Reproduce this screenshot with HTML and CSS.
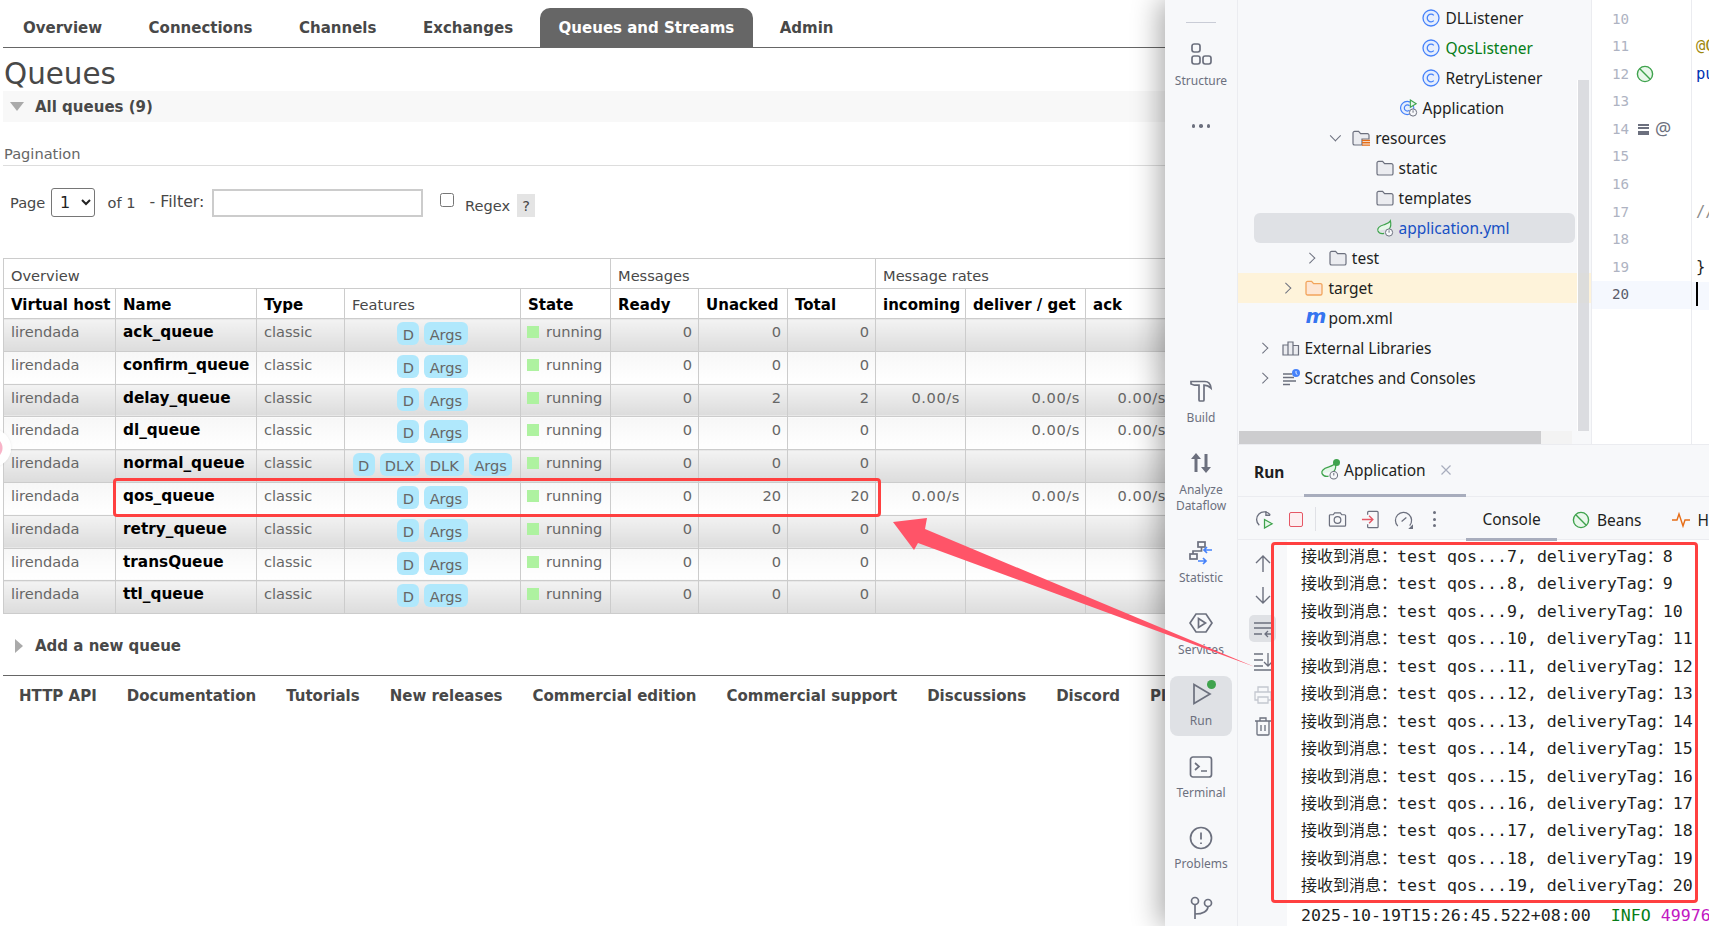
FILE: index.html
```html
<!DOCTYPE html>
<html lang="en">
<head>
<meta charset="utf-8">
<title>RabbitMQ Queues and IDE</title>
<link rel="stylesheet" href="styles.css">
</head>
<body>
<svg class="defs" width="0" height="0" aria-hidden="true">
  <symbol id="i-class" viewBox="0 0 18 18"><circle cx="9" cy="9" r="8" fill="#e7effd" stroke="#4682fa" stroke-width="1.3"/><path d="M11.8 6.4A3.8 3.8 0 1 0 11.8 11.6" fill="none" stroke="#4682fa" stroke-width="1.3"/></symbol>
  <symbol id="i-app" viewBox="0 0 20 20"><circle cx="8" cy="10" r="7.4" fill="#e7effd" stroke="#4682fa" stroke-width="1.3"/><path d="M10.6 7.6A3.4 3.4 0 1 0 10.6 12.4" fill="none" stroke="#4682fa" stroke-width="1.3"/><path d="M11.5 1.2l6.5 4-6.5 4z" fill="#e6f7e9" stroke="#3fa34d" stroke-width="1.2"/><circle cx="14.5" cy="15" r="4" fill="#f7f8fa" stroke="#6c707e" stroke-width="1.1"/><path d="M14.5 12.6v2.6" stroke="#6c707e" stroke-width="1.1"/></symbol>
  <symbol id="i-folder" viewBox="0 0 18 18"><path d="M1 4a1.6 1.6 0 0 1 1.6-1.6h4l2 2.2h6.8A1.6 1.6 0 0 1 17 6.200v8.200a1.600 1.600 0 0 1-1.600 1.600H2.600A1.600 1.600 0 0 1 1 14.400z" fill="#ebecf0" stroke="#6c707e" stroke-width="1.2"/></symbol>
  <symbol id="i-res" viewBox="0 0 18 18"><path d="M1 4a1.600 1.600 0 0 1 1.600-1.600h4l2 2.200h6.800A1.600 1.600 0 0 1 17 6.200V10H10v6H2.600A1.600 1.600 0 0 1 1 14.400z" fill="#ebecf0" stroke="#6c707e" stroke-width="1.2"/><path d="M10 11.500h8M10 13.800h8M10 16.100h8" stroke="#e66d17" stroke-width="1.400"/></symbol>
  <symbol id="i-target" viewBox="0 0 18 18"><path d="M1 4a1.600 1.600 0 0 1 1.600-1.600h4l2 2.200h6.800A1.600 1.600 0 0 1 17 6.200v8.200a1.600 1.600 0 0 1-1.600 1.600H2.600A1.600 1.600 0 0 1 1 14.400z" fill="#fde6d4" stroke="#f2a45c" stroke-width="1.300"/></symbol>
  <symbol id="i-spring" viewBox="0 0 20 20"><path d="M2 13c-1-5 5-6 8-7 3-1 5-2 6-4 1 4 .5 7-1.500 9M9 16C5 17 3 15 2 13" fill="#e6f7e9" stroke="#3fa34d" stroke-width="1.300"/><circle cx="14.500" cy="15" r="4" fill="#f7f8fa" stroke="#6c707e" stroke-width="1.100"/><path d="M14.500 12.600v2.600" stroke="#6c707e" stroke-width="1.100"/></symbol>
  <symbol id="i-lib" viewBox="0 0 18 18"><path d="M1 6h5v10H1zM6 3h5v13H6zM11 6.500h5.500V16H11z" fill="#ebecf0" stroke="#6c707e" stroke-width="1.200"/></symbol>
  <symbol id="i-scratch" viewBox="0 0 18 18"><path d="M1 5h9M1 8.500h11M1 12h13M1 15.500h7" stroke="#6c707e" stroke-width="1.300"/><circle cx="14" cy="4" r="4" fill="#4682fa"/><path d="M14 2v2.500l1.400 1" stroke="#fff" stroke-width=".9" fill="none"/></symbol>
  <symbol id="i-nobeans" viewBox="0 0 18 18"><circle cx="9" cy="9" r="7.600" fill="#eaf7ec" stroke="#3fa34d" stroke-width="1.400"/><path d="M3.800 3.800L14.200 14.200" stroke="#3fa34d" stroke-width="1.400"/></symbol>
  <symbol id="s-structure" viewBox="0 0 24 24"><rect x="3" y="2" width="8" height="8" rx="2.200"/><rect x="3" y="14" width="8" height="8" rx="2.200"/><rect x="14" y="14" width="8" height="8" rx="2.200"/></symbol>
  <symbol id="s-build" viewBox="0 0 24 24"><path d="M2 2.500h14c3.500 0 5.500 2.500 6 6.500-2-1.800-4-2.800-7-2.800V21a1 1 0 0 1-1 1h-3a1 1 0 0 1-1-1V6.200H5.500L2 5z"/></symbol>
  <symbol id="s-analyze" viewBox="0 0 24 24"><path d="M7 2L2 8h3.500v13h3V8H12zM17 22l5-6h-3.500V3h-3v13H12z" class="solid"/></symbol>
  <symbol id="s-stat" viewBox="0 0 24 24"><rect x="9" y="1" width="7" height="5"/><path d="M12.500 6v4H4v3"/><rect x="1" y="13" width="7" height="5"/><path d="M23 9h-8M18 6l-3 3 3 3M9 20h8M14 17l3 3-3 3" class="blue"/></symbol>
  <symbol id="s-services" viewBox="0 0 24 24"><path d="M7 3h10l6 9-6 9H7l-6-9z"/><path d="M9.500 7.500l7 4.500-7 4.500z"/></symbol>
  <symbol id="s-run" viewBox="0 0 24 24"><path d="M5 2.500L21 12 5 21.500z"/></symbol>
  <symbol id="s-terminal" viewBox="0 0 24 24"><rect x="1.500" y="2" width="21" height="20" rx="2.500"/><path d="M6 8l4 3.500L6 15M12 16h6"/></symbol>
  <symbol id="s-problems" viewBox="0 0 24 24"><circle cx="12" cy="12" r="10.500"/><path d="M12 6.500v7M12 16.500v1.500"/></symbol>
  <symbol id="s-git" viewBox="0 0 24 24"><circle cx="6" cy="5" r="3.500"/><circle cx="19" cy="7" r="3.500"/><path d="M6 8.500V23M6 18c8 0 13-3 13-7.500"/></symbol>
</svg>

<main class="browser">
  <nav class="nav">
    <a class="tab">Overview</a><a class="tab">Connections</a><a class="tab">Channels</a><a class="tab">Exchanges</a><a class="tab tab-on">Queues and Streams</a><a class="tab">Admin</a>
  </nav>
  <h1 class="title">Queues</h1>
  <div class="section-bar"><span class="tri-down"></span><span>All queues (9)</span></div>
  <h3 class="pag-title">Pagination</h3>
  <div class="pager">
    <span class="pg-page">Page</span>
    <select class="pg-select"><option>1</option></select>
    <span class="pg-of">of 1</span>
    <span class="pg-filter">- Filter:</span>
    <input class="pg-input" type="text">
    <input class="pg-check" type="checkbox">
    <span class="pg-regex">Regex</span>
    <span class="pg-help">?</span>
  </div>
  <table class="queues">
    <colgroup><col class="c1"><col class="c2"><col class="c3"><col class="c4"><col class="c5"><col class="c6"><col class="c7"><col class="c8"><col class="c9"><col class="c10"><col class="c11"></colgroup>
    <thead>
      <tr class="group"><th colspan="5">Overview</th><th colspan="3">Messages</th><th colspan="3">Message rates</th></tr>
      <tr class="head"><th>Virtual host</th><th>Name</th><th>Type</th><th class="plain">Features</th><th>State</th><th>Ready</th><th>Unacked</th><th>Total</th><th>incoming</th><th>deliver / get</th><th>ack</th></tr>
    </thead>
    <tbody>
      <tr class="alt1"><td>lirendada</td><td class="nm">ack_queue</td><td>classic</td><td><div class="feat"><span class="bdg">D</span><span class="bdg">Args</span></div></td><td><span class="st"></span>running</td><td class="r">0</td><td class="r">0</td><td class="r">0</td><td></td><td></td><td></td></tr>
      <tr class="alt2"><td>lirendada</td><td class="nm">confirm_queue</td><td>classic</td><td><div class="feat"><span class="bdg">D</span><span class="bdg">Args</span></div></td><td><span class="st"></span>running</td><td class="r">0</td><td class="r">0</td><td class="r">0</td><td></td><td></td><td></td></tr>
      <tr class="alt1"><td>lirendada</td><td class="nm">delay_queue</td><td>classic</td><td><div class="feat"><span class="bdg">D</span><span class="bdg">Args</span></div></td><td><span class="st"></span>running</td><td class="r">0</td><td class="r">2</td><td class="r">2</td><td class="r rt">0.00/s</td><td class="r rt">0.00/s</td><td class="r rt">0.00/s</td></tr>
      <tr class="alt2"><td>lirendada</td><td class="nm">dl_queue</td><td>classic</td><td><div class="feat"><span class="bdg">D</span><span class="bdg">Args</span></div></td><td><span class="st"></span>running</td><td class="r">0</td><td class="r">0</td><td class="r">0</td><td></td><td class="r rt">0.00/s</td><td class="r rt">0.00/s</td></tr>
      <tr class="alt1"><td>lirendada</td><td class="nm">normal_queue</td><td>classic</td><td><div class="feat"><span class="bdg">D</span><span class="bdg">DLX</span><span class="bdg">DLK</span><span class="bdg">Args</span></div></td><td><span class="st"></span>running</td><td class="r">0</td><td class="r">0</td><td class="r">0</td><td></td><td></td><td></td></tr>
      <tr class="alt2"><td>lirendada</td><td class="nm">qos_queue</td><td>classic</td><td><div class="feat"><span class="bdg">D</span><span class="bdg">Args</span></div></td><td><span class="st"></span>running</td><td class="r">0</td><td class="r">20</td><td class="r">20</td><td class="r rt">0.00/s</td><td class="r rt">0.00/s</td><td class="r rt">0.00/s</td></tr>
      <tr class="alt1"><td>lirendada</td><td class="nm">retry_queue</td><td>classic</td><td><div class="feat"><span class="bdg">D</span><span class="bdg">Args</span></div></td><td><span class="st"></span>running</td><td class="r">0</td><td class="r">0</td><td class="r">0</td><td></td><td></td><td></td></tr>
      <tr class="alt2"><td>lirendada</td><td class="nm">transQueue</td><td>classic</td><td><div class="feat"><span class="bdg">D</span><span class="bdg">Args</span></div></td><td><span class="st"></span>running</td><td class="r">0</td><td class="r">0</td><td class="r">0</td><td></td><td></td><td></td></tr>
      <tr class="alt1"><td>lirendada</td><td class="nm">ttl_queue</td><td>classic</td><td><div class="feat"><span class="bdg">D</span><span class="bdg">Args</span></div></td><td><span class="st"></span>running</td><td class="r">0</td><td class="r">0</td><td class="r">0</td><td></td><td></td><td></td></tr>
    </tbody>
  </table>
  <div class="add"><span class="tri-right"></span><span>Add a new queue</span></div>
  <footer class="foot">
    <a>HTTP API</a><a>Documentation</a><a>Tutorials</a><a>New releases</a><a>Commercial edition</a><a>Commercial support</a><a>Discussions</a><a>Discord</a><a>Plugins</a>
  </footer>
  <div class="float-dot"></div>
</main>

<aside class="ide">
  <div class="rail">
    <div class="rail-dash"></div>
    <div class="rail-item"><svg class="ri"><use href="#s-structure"/></svg><span>Structure</span></div>
    <div class="rail-dots"><i></i><i></i><i></i></div>
    <div class="rail-bottom">
      <div class="rail-item build"><svg class="ri"><use href="#s-build"/></svg><span>Build</span></div>
      <div class="rail-item analyze"><svg class="ri ri-solid"><use href="#s-analyze"/></svg><span>Analyze<br>Dataflow</span></div>
      <div class="rail-item stat"><svg class="ri"><use href="#s-stat"/></svg><span>Statistic</span></div>
      <div class="rail-item"><svg class="ri"><use href="#s-services"/></svg><span>Services</span></div>
      <div class="rail-item active"><div class="run-ico"><svg class="ri"><use href="#s-run"/></svg><b class="run-dot"></b></div><span>Run</span></div>
      <div class="rail-item term"><svg class="ri"><use href="#s-terminal"/></svg><span>Terminal</span></div>
      <div class="rail-item prob"><svg class="ri"><use href="#s-problems"/></svg><span>Problems</span></div>
      <div class="rail-item git"><svg class="ri"><use href="#s-git"/></svg></div>
    </div>
  </div>
  <div class="work">
    <div class="upper">
      <div class="tree">
        <div class="row l6"><i class="chev"></i><svg class="ti"><use href="#i-class"/></svg><span>DLListener</span></div>
        <div class="row l6"><i class="chev"></i><svg class="ti"><use href="#i-class"/></svg><span class="green">QosListener</span></div>
        <div class="row l6"><i class="chev"></i><svg class="ti"><use href="#i-class"/></svg><span>RetryListener</span></div>
        <div class="row l5"><i class="chev"></i><svg class="ti"><use href="#i-app"/></svg><span>Application</span></div>
        <div class="row l3"><i class="chev open"></i><svg class="ti"><use href="#i-res"/></svg><span>resources</span></div>
        <div class="row l4"><i class="chev"></i><svg class="ti"><use href="#i-folder"/></svg><span>static</span></div>
        <div class="row l4"><i class="chev"></i><svg class="ti"><use href="#i-folder"/></svg><span>templates</span></div>
        <div class="row l4 sel"><i class="chev"></i><svg class="ti"><use href="#i-spring"/></svg><span class="blue-t">application.yml</span></div>
        <div class="row l2"><i class="chev closed"></i><svg class="ti"><use href="#i-folder"/></svg><span>test</span></div>
        <div class="row l1 excl"><i class="chev closed"></i><svg class="ti"><use href="#i-target"/></svg><span>target</span></div>
        <div class="row l1"><i class="chev"></i><i class="ti maven">m</i><span>pom.xml</span></div>
        <div class="row l0"><i class="chev closed"></i><svg class="ti"><use href="#i-lib"/></svg><span>External Libraries</span></div>
        <div class="row l0"><i class="chev closed"></i><svg class="ti"><use href="#i-scratch"/></svg><span>Scratches and Consoles</span></div>
        <div class="vscroll"></div>
        <div class="hscroll"><div class="hthumb"></div></div>
      </div>
      <div class="editor">
        <div class="gutter">
          <div class="gl">10</div>
          <div class="gl">11</div>
          <div class="gl">12<svg class="gi"><use href="#i-nobeans"/></svg></div>
          <div class="gl">13</div>
          <div class="gl">14<i class="gi-block"></i><span class="gi-at">@</span></div>
          <div class="gl">15</div>
          <div class="gl">16</div>
          <div class="gl">17</div>
          <div class="gl">18</div>
          <div class="gl">19</div>
          <div class="gl cur">20</div>
        </div>
        <div class="code">
          <div class="cl"></div>
          <div class="cl anno">@C</div>
          <div class="cl kw">pu</div>
          <div class="cl"></div>
          <div class="cl"></div>
          <div class="cl"></div>
          <div class="cl"></div>
          <div class="cl cmt">//</div>
          <div class="cl"></div>
          <div class="cl">}</div>
          <div class="cl cur"><i class="caret"></i></div>
        </div>
      </div>
    </div>
    <div class="panel">
      <div class="ptabs">
        <span class="p-run">Run</span>
        <div class="p-app">
          <svg class="pa-ico"><use href="#i-spring"/></svg><b class="pa-dot"></b>
          <span>Application</span>
          <svg class="pa-x" viewBox="0 0 10 10"><path d="M.5.5l9 9M9.500.5l-9 9"/></svg>
        </div>
      </div>
      <div class="ptools">
        <svg class="tb t-rerun" viewBox="0 0 20 20"><path d="M16 5A8 8 0 1 0 4.500 16" fill="none" stroke="#6c707e" stroke-width="1.400"/><path d="M11.500 1v4.500H16" fill="none" stroke="#6c707e" stroke-width="1.400"/><path d="M10 10l8 4.500-8 4.500z" fill="#e6f7e9" stroke="#3fa34d" stroke-width="1.300"/></svg>
        <span class="t-stop"></span>
        <span class="t-sep"></span>
        <svg class="tb t-cam" viewBox="0 0 20 20"><path d="M1.500 6a1 1 0 0 1 1-1h3l1.500-2h6l1.500 2h3a1 1 0 0 1 1 1v10a1 1 0 0 1-1 1h-15a1 1 0 0 1-1-1z" fill="none" stroke="#6c707e" stroke-width="1.300"/><circle cx="10" cy="10.500" r="3.500" fill="none" stroke="#6c707e" stroke-width="1.300"/></svg>
        <svg class="tb t-exit" viewBox="0 0 20 20"><path d="M7 5V2.500a1 1 0 0 1 1-1h9a1 1 0 0 1 1 1v15a1 1 0 0 1-1 1H8a1 1 0 0 1-1-1V15" fill="none" stroke="#6c707e" stroke-width="1.300"/><path d="M1 10h11M8.500 6l4 4-4 4" fill="none" stroke="#e55765" stroke-width="1.400"/></svg>
        <svg class="tb t-dial" viewBox="0 0 20 20"><path d="M4 17a8.500 8.500 0 1 1 12.500-.5" fill="none" stroke="#6c707e" stroke-width="1.300"/><path d="M8 12l5-4" stroke="#6c707e" stroke-width="1.300"/><path d="M20 15v5h-5z" fill="#6c707e"/></svg>
        <span class="t-more"><i></i><i></i><i></i></span>
        <span class="pt-tab pt-on">Console</span>
        <span class="pt-tab pt-beans"><svg class="pt-i"><use href="#i-nobeans"/></svg>Beans</span>
        <span class="pt-tab pt-h"><svg class="pt-i" viewBox="0 0 18 18"><path d="M0 9h5l2-6 4 12 2-6h5" fill="none" stroke="#e66d17" stroke-width="1.400"/></svg>H</span>
      </div>
      <div class="pbody">
        <div class="side">
          <svg class="sb" viewBox="0 0 20 20"><path d="M10 18V3M3 9l7-7 7 7" fill="none" stroke="#6c707e" stroke-width="1.400"/></svg>
          <svg class="sb" viewBox="0 0 20 20"><path d="M10 2v15M3 11l7 7 7-7" fill="none" stroke="#6c707e" stroke-width="1.400"/></svg>
          <div class="sb-box"><svg class="sb" viewBox="0 0 20 20"><path d="M1 4h18M1 9h18M1 15h8M19 9v6h-7M15 12l-3 3 3 3" fill="none" stroke="#6c707e" stroke-width="1.300"/></svg></div>
          <svg class="sb" viewBox="0 0 20 20"><path d="M1 3h9M1 9h9M1 15h9M1 19h18M15 2v13M11 11l4 4 4-4" fill="none" stroke="#6c707e" stroke-width="1.300"/></svg>
          <svg class="sb sb-dim" viewBox="0 0 20 20"><path d="M5 7V2h10v5M5 15H2V7h16v8h-3M5 12h10v6H5z" fill="none" stroke="#c4c7d0" stroke-width="1.300"/></svg>
          <svg class="sb" viewBox="0 0 20 20"><path d="M2 5h16M7 5V2h6v3M4 5v13a1 1 0 0 0 1 1h10a1 1 0 0 0 1-1V5M8 9v6M12 9v6" fill="none" stroke="#6c707e" stroke-width="1.300"/></svg>
        </div>
        <div class="console">
          <div><span class="zh">接收到消息：</span>test qos...7, deliveryTag<span class="zh">：</span>8</div>
          <div><span class="zh">接收到消息：</span>test qos...8, deliveryTag<span class="zh">：</span>9</div>
          <div><span class="zh">接收到消息：</span>test qos...9, deliveryTag<span class="zh">：</span>10</div>
          <div><span class="zh">接收到消息：</span>test qos...10, deliveryTag<span class="zh">：</span>11</div>
          <div><span class="zh">接收到消息：</span>test qos...11, deliveryTag<span class="zh">：</span>12</div>
          <div><span class="zh">接收到消息：</span>test qos...12, deliveryTag<span class="zh">：</span>13</div>
          <div><span class="zh">接收到消息：</span>test qos...13, deliveryTag<span class="zh">：</span>14</div>
          <div><span class="zh">接收到消息：</span>test qos...14, deliveryTag<span class="zh">：</span>15</div>
          <div><span class="zh">接收到消息：</span>test qos...15, deliveryTag<span class="zh">：</span>16</div>
          <div><span class="zh">接收到消息：</span>test qos...16, deliveryTag<span class="zh">：</span>17</div>
          <div><span class="zh">接收到消息：</span>test qos...17, deliveryTag<span class="zh">：</span>18</div>
          <div><span class="zh">接收到消息：</span>test qos...18, deliveryTag<span class="zh">：</span>19</div>
          <div><span class="zh">接收到消息：</span>test qos...19, deliveryTag<span class="zh">：</span>20</div>
          <div class="log-last">2025-10-19T15:26:45.522+08:00  <span class="info">INFO</span> <span class="pid">49976</span></div>
        </div>
      </div>
    </div>
  </div>
</aside>

<div class="mark mark-row"></div>
<div class="mark mark-console"></div>
<svg class="arrow" viewBox="0 0 1709 926"><polygon points="893,522 927,518 925,529 1255,667 918,543 914,550"/></svg>
</body>
</html>
```
FILE: styles.css
```css
* { box-sizing: border-box; }
html, body { margin: 0; height: 100%; }
body { display: flex; width: 1709px; height: 926px; overflow: hidden; background: #fff; position: relative; font-family: "DejaVu Sans", sans-serif; }
.defs { position: absolute; }

/* browser pane */
.browser { width: 1165px; height: 926px; padding-left: 3px; overflow: hidden; position: relative; flex: none; color: #484848; font-size: 14.6px; }
.nav { display: flex; margin-top: 8px; height: 40px; border-bottom: 1.5px solid #666; white-space: nowrap; }
.tab { height: 38.5px; line-height: 41px; padding: 0 20px; margin-right: 6.500px; font-weight: 700; font-size: 15px; color: #484848; border-radius: 10px 10px 0 0; }
.tab-on { background: #666; color: #fff; padding: 0 19px; }
.title { margin: 0; height: 43px; line-height: 52px; font-size: 29.4px; font-weight: 400; color: #484848; padding-left: 1px; }
.section-bar { height: 31px; background: #f8f8f8; display: flex; align-items: center; padding-left: 7px; font-weight: 700; font-size: 15px; color: #484848; gap: 11px; }
.tri-down { width: 0; height: 0; border-left: 7px solid transparent; border-right: 7px solid transparent; border-top: 9px solid #aaa; }
.pag-title { margin: 0; padding: 22px 0 0 1px; height: 44px; line-height: 20px; font-size: 14.6px; font-weight: 400; color: #666; border-bottom: 1px solid #ddd; }
.pager { display: flex; align-items: center; height: 29px; margin-top: 22px; padding-left: 7px; color: #484848; white-space: nowrap; }
.pg-page { width: 41px; }
.pg-select { width: 44px; height: 29px; font: 16px "DejaVu Sans", sans-serif; background: #fff; border: 1px solid #767676; border-radius: 3px; color: #222; padding-left: 4px; }
.pg-of { margin-left: 12.500px; width: 42px; }
.pg-filter { width: 62px; margin-top: -2px; font-size: 15.800px; }
.pg-input { width: 211px; height: 28px; border: 2px solid #ccc; background: #fff; margin: 0; }
.pg-check { width: 14.500px; height: 14px; margin: -6px 0 0 17px; }
.pg-regex { margin: 6px 0 0 11px; width: 52px; }
.pg-help { width: 18px; height: 23px; background: #e4e4e4; text-align: center; line-height: 24px; margin-top: 6px; }

.queues { table-layout: fixed; width: 1168px; border-collapse: collapse; margin-top: 41px; font-size: 14.6px; line-height: 20px; }
.c1 { width: 112px; } .c2 { width: 141px; } .c3 { width: 88px; } .c4 { width: 176px; } .c5 { width: 90px; }
.c6 { width: 88px; } .c7 { width: 89px; } .c8 { width: 88px; } .c9 { width: 90px; } .c10 { width: 120px; } .c11 { width: 86px; }
.queues th, .queues td { border: 1px solid #ccc; padding: 3px 7px 0; vertical-align: top; text-align: left; white-space: nowrap; }
.group th { height: 30px; font-weight: 400; color: #484848; padding-top: 7px; }
.head th { height: 30px; font-weight: 700; font-size: 15px; color: #000; padding-top: 6px; }
.head th.plain { font-weight: 400; font-size: 14.6px; color: #484848; }
.queues td { height: 32.800px; color: #666; overflow: hidden; }
.queues td.nm { font-weight: 700; font-size: 15.300px; color: #000; }
.queues td.r { text-align: right; padding-right: 6px; }
.queues td.rt { letter-spacing: .6px; padding-right: 5px; }
.alt1 td { background: linear-gradient(#f3f3f3, #dcdcdc); }
.alt2 td { background: linear-gradient(#f7f7f7, #fff); }
.feat { display: flex; justify-content: center; gap: 5px; }
.bdg { height: 23px; line-height: 25px; padding: 0 5.300px; border-radius: 6px; background: #b0e8fc; color: #666; }
.st { display: inline-block; width: 12px; height: 12px; background: #aef2a0; margin-right: 7px; margin-left: -1px; vertical-align: -1px; }
.add { display: flex; align-items: center; margin-top: 21px; height: 22px; padding-left: 12px; gap: 12px; font-weight: 700; font-size: 15px; color: #484848; }
.tri-right { width: 0; height: 0; border-top: 7px solid transparent; border-bottom: 7px solid transparent; border-left: 8px solid #aaa; }
.foot { display: flex; gap: 30px; margin-top: 18px; height: 44px; padding: 10px 0 0 16px; border-top: 1.500px solid #666; font-weight: 700; font-size: 15px; color: #484848; white-space: nowrap; line-height: 20px; }
.float-dot { position: absolute; left: -27px; top: 429px; width: 38px; height: 38px; border-radius: 50%; background: radial-gradient(circle at 50% 50%, #f8b4c8 0 10px, #fff 11px); box-shadow: 0 0 3px rgba(0,0,0,.08); }

/* IDE */
.ide { width: 544px; height: 926px; display: flex; flex: none; position: relative; z-index: 1; box-shadow: -6px 0 26px rgba(0,0,0,.32); background: #f7f8fa; font-family: "Noto Sans", sans-serif; color: #1e1f22; }
.rail { width: 73px; flex: none; display: flex; flex-direction: column; align-items: center; border-right: 1px solid #ebecf0; background: #f7f8fa; padding-top: 22px; }
.rail-dash { width: 30px; height: 1px; background: #c9ccd6; margin-bottom: 19px; }
.rail-item { display: flex; flex-direction: column; align-items: center; height: 71px; width: 62px; font-size: 12px; line-height: 16.500px; color: #6c707e; text-align: center; }
.rail-item span { margin-top: 6.500px; }
.rail-item.stat span { margin-top: 5px; }
.rail-item.term span, .rail-item.prob span { margin-top: 5.500px; }
.ri { width: 24px; height: 24px; fill: none; stroke: #6c707e; stroke-width: 1.700px; flex: none; display: block; }
.ri-solid { fill: #6c707e; stroke: none; }
.blue { stroke: #4682fa; }
.rail-dots { display: flex; gap: 4px; height: 4px; margin-top: 11px; }
.rail-dots i, .t-more i { width: 3.500px; height: 3.500px; border-radius: 50%; background: #6c707e; display: block; }
.rail-bottom { margin-top: auto; margin-bottom: 6px; display: flex; flex-direction: column; align-items: center; }
.build { height: 72px; }
.analyze { height: 90px; }
.stat { height: 70px; }
.active { height: 60px; padding-top: 6px; margin: -6px 0 19px; background: #dfe1e5; border-radius: 8px; }
.run-ico { position: relative; }
.run-dot { position: absolute; right: -3px; top: -2px; width: 9px; height: 9px; border-radius: 50%; background: #3fa34d; }
.prob { height: 70px; }
.git { height: 24px; }

.work { flex: 1; display: flex; flex-direction: column; min-width: 0; }
.upper { height: 445px; display: flex; border-bottom: 1px solid #ebecf0; flex: none; overflow: hidden; }
.tree { width: 353px; flex: none; padding-top: 3px; position: relative; overflow: hidden; font-size: 15.500px; }
.row { height: 30px; display: flex; align-items: center; position: relative; z-index: 0; white-space: nowrap; }
.l0 { padding-left: 21.500px; } .l1 { padding-left: 45.400px; } .l2 { padding-left: 68.800px; } .l3 { padding-left: 92.200px; }
.l4 { padding-left: 115.600px; } .l5 { padding-left: 139.500px; } .l6 { padding-left: 162.400px; }
.chev { width: 22px; flex: none; height: 10px; position: relative; display: block; }
.chev.closed::before, .chev.open::before { content: ""; position: absolute; width: 6.500px; height: 6.500px; border-right: 1.300px solid #6c707e; border-top: 1.300px solid #6c707e; }
.chev.closed::before { left: -1px; top: 1px; transform: rotate(45deg); }
.chev.open::before { left: 2px; top: -1px; transform: rotate(135deg); }
.ti { width: 18px; height: 18px; flex: none; margin-right: 5px; display: block; }
.maven { font: italic 700 20px/14px "DejaVu Sans", sans-serif; color: #3574f0; overflow: visible; }
.green { color: #067d17; }
.blue-t { color: #1750c4; }
.sel::before { content: ""; position: absolute; z-index: -1; left: 16px; width: 321px; top: 0; bottom: 0; background: #dfe1e5; border-radius: 6px; }
.excl { background: #fef3da; }
.vscroll { position: absolute; left: 339px; top: 80px; width: 12px; bottom: 13px; background: rgba(214,215,218,.85); border-left: 1px solid #fff; }
.hscroll { position: absolute; left: 1px; bottom: 0; width: 333px; height: 13px; background: #f3f3f3; }
.hthumb { width: 302px; height: 13px; background: #cdcdcf; }

.editor { flex: 1; display: flex; background: #fff; min-width: 0; overflow: hidden; position: relative; font-family: "DejaVu Sans Mono", monospace; font-size: 14.200px; border-left: 1px solid #ebecf0; }
.gutter { width: 100px; flex: none; border-right: 1px solid #ebecf0; padding-top: 5.500px; color: #aeb3c2; }
.gl { height: 27.600px; line-height: 27.600px; padding-left: 20px; position: relative; }
.cur { background: #f5f8fe; color: #5a5d6b; }
.gi { position: absolute; left: 44px; top: 4px; width: 18px; height: 18px; }
.gi-block { position: absolute; left: 46px; top: 8px; width: 11px; height: 11px; background: linear-gradient(#6c707e 0 2px, transparent 2px 3px, #6c707e 3px 5px, transparent 5px 7px, #6c707e 7px); }
.gi-at { position: absolute; left: 63px; top: -1px; color: #6c707e; font-family: "Noto Sans", sans-serif; font-size: 18px; }
.code { flex: 1; padding: 5.500px 0 0 4px; font-size: 15.500px; color: #1e1f22; white-space: nowrap; overflow: hidden; }
.cl { height: 27.600px; line-height: 27.600px; margin-left: -4px; padding-left: 4px; }
.anno { color: #9e880d; }
.kw { color: #0033b3; }
.cmt { color: #8c8c8c; }
.caret { display: block; width: 2px; height: 24px; background: #000; margin-top: 1px; }

.panel { flex: 1; display: flex; flex-direction: column; min-height: 0; }
.ptabs { height: 52px; flex: none; display: flex; align-items: stretch; border-bottom: 1px solid #ebecf0; padding-left: 16px; font-size: 15.500px; white-space: nowrap; }
.p-run { font-weight: 700; line-height: 54px; width: 50px; }
.p-app { width: 162px; display: flex; align-items: center; border-bottom: 3px solid #a8adbd; padding: 1px 0 0 16px; position: relative; height: 52px; }
.pa-ico { width: 19px; height: 19px; margin-right: 5px; }
.pa-dot { position: absolute; left: 29px; top: 14px; width: 7px; height: 7px; border-radius: 50%; background: #3fa34d; }
.pa-x { width: 10px; height: 10px; margin-left: 15px; fill: none; stroke: #a8adbd; stroke-width: 1.200px; }
.ptools { height: 43px; flex: none; display: flex; align-items: center; position: relative; padding: 2px 0 0 17px; border-bottom: 1px solid #ebecf0; }
.tb { width: 19px; height: 19px; flex: none; display: block; }
.t-stop { width: 15px; height: 15px; border: 1.500px solid #e55765; background: #fdeef0; border-radius: 2px; margin-left: 14.500px; }
.t-sep { width: 1px; height: 24px; background: #e0e1e6; margin: 0 12px; }
.t-exit { margin-left: 14px; }
.t-dial { margin-left: 14px; }
.t-more { display: flex; flex-direction: column; gap: 3.500px; margin-left: 20px; }
.t-more i { width: 3px; height: 3px; }
.pt-tab { font-size: 15.500px; display: flex; align-items: center; height: 43px; padding-top: 3px; white-space: nowrap; margin-top: -2px; }
.pt-on { margin-left: 30px; width: 93px; justify-content: center; border-bottom: 3px solid #a8adbd; position: relative; top: 1px; padding-top: 2px; }
.pt-i { width: 18px; height: 18px; margin-right: 7px; }
.pt-beans { margin-left: 15px; }
.pt-h { margin-left: 31px; }
.pbody { flex: 1; display: flex; min-height: 0; }
.side { width: 49px; flex: none; display: flex; flex-direction: column; align-items: center; padding-top: 14px; }
.sb { width: 20px; height: 20px; margin-bottom: 11px; display: block; flex: none; }
.sb-box { width: 27px; height: 27px; background: #dfe1e5; border-radius: 5px; display: flex; align-items: center; justify-content: center; margin: -1px 0 9px; }
.sb-box .sb { margin: 0; }
.sb-dim { margin-top: 3px; }
.console { flex: 1; background: #fff; padding: 3px 0 0 14px; font-family: "DejaVu Sans Mono", "Noto Sans CJK SC", monospace; font-size: 16.600px; line-height: 27.440px; overflow: hidden; color: #1e1f22; }
.console div { white-space: pre; height: 27.440px; }
.console .zh { font-family: "Noto Sans CJK SC", sans-serif; font-size: 16px; line-height: 1; }
.console .log-last { margin-top: 2px; }
.info { color: #067d17; }
.pid { color: #c218c2; }

/* annotations over the screenshot */
.mark { position: absolute; border: 3.500px solid #ff4040; border-radius: 4px; z-index: 2; }
.mark-row { left: 113px; top: 478px; width: 768px; height: 38.500px; }
.mark-console { left: 1271px; top: 542px; width: 427px; height: 361px; }
.arrow { position: absolute; left: 0; top: 0; width: 1709px; height: 926px; z-index: 3; pointer-events: none; }
.arrow polygon { fill: #ff5468; }
```
